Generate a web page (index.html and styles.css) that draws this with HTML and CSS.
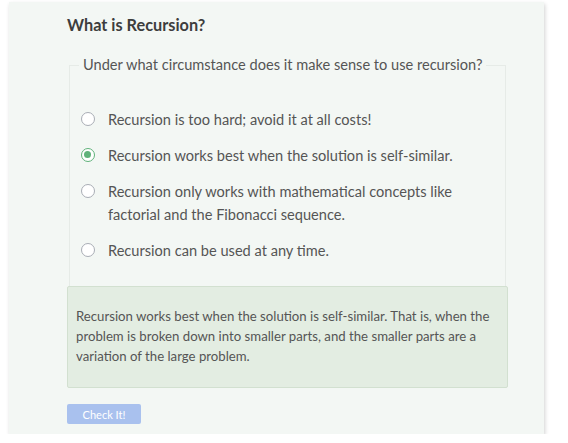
FILE: index.html
```html
<!DOCTYPE html>
<html>
<head>
<meta charset="utf-8">
<link rel="stylesheet" href="styles.css">
</head>
<body>
<div class="card">
  <h2 class="title">What is Recursion?</h2>
  <fieldset class="question">
    <legend class="legend">Under what circumstance does it make sense to use recursion?</legend>
    <ul class="options">
      <li class="option"><span class="radio"></span><span class="label">Recursion is too hard; avoid it at all costs!</span></li>
      <li class="option"><span class="radio checked"></span><span class="label">Recursion works best when the solution is self-similar.</span></li>
      <li class="option"><span class="radio"></span><span class="label">Recursion only works with mathematical concepts like factorial and the Fibonacci sequence.</span></li>
      <li class="option"><span class="radio"></span><span class="label">Recursion can be used at any time.</span></li>
    </ul>
  </fieldset>
  <div class="feedback">Recursion works best when the solution is self-similar. That is, when the problem is broken down into smaller parts, and the smaller parts are a variation of the large problem.</div>
  <button class="check">Check It!</button>
</div>
</body>
</html>
```
FILE: styles.css
```css
* { box-sizing: border-box; }
body {
  margin: 0;
  background: #ffffff;
  font-family: Lato, "Noto Sans", sans-serif;
  color: #555;
}
.card {
  margin: 2px 0 0 9px;
  width: 535px;
  height: 432px;
  background: #f3f7f4;
  box-shadow: 1px 2px 4px rgba(0,0,0,0.18);
  padding: 12px 38px 0 58px;
}
.title {
  margin: 0 0 20px 0;
  font-size: 16.3px;
  font-weight: 700;
  color: #3d3d3d;
  line-height: 22px;
}
.question {
  margin: 0 0 0 2px;
  width: 437px;
  height: 230px;
  border: 1px solid #e6ebe7;
  border-bottom: none;
  padding: 0 0 0 9px;
}
.legend {
  padding: 0 4px;
  font-size: 14.6px;
  line-height: 18px;
  color: #555;
}
.options {
  list-style: none;
  margin: 34px 0 0 0;
  padding: 0;
}
.option {
  display: flex;
  align-items: flex-start;
  margin-bottom: 13px;
  font-size: 14.6px;
  line-height: 23px;
  color: #555;
}
.radio {
  flex: none;
  width: 14px;
  height: 14px;
  border: 1px solid #a9adb5;
  border-radius: 50%;
  margin: 4px 13px 0 2px;
  background: #fff;
  position: relative;
}
.radio.checked {
  border: 1.5px solid #5fb27a;
}
.radio.checked::after {
  content: "";
  position: absolute;
  left: 2px;
  top: 2px;
  width: 7px;
  height: 7px;
  border-radius: 50%;
  background: #5fb27a;
}
.label { width: 375px; }
.feedback {
  width: 441px;
  height: 102px;
  background: #e3ede2;
  border: 1px solid #d2e0d0;
  border-radius: 2px;
  padding: 19px 8px 0 8px;
  font-size: 13.2px;
  line-height: 20px;
  color: #555;
}
.check {
  display: block;
  margin-top: 16px;
  width: 74px;
  height: 20px;
  border: none;
  border-radius: 2px;
  background: #a9c1ee;
  color: #fff;
  font-family: Lato, "Noto Sans", sans-serif;
  font-size: 11px;
  padding: 0;
}
```
